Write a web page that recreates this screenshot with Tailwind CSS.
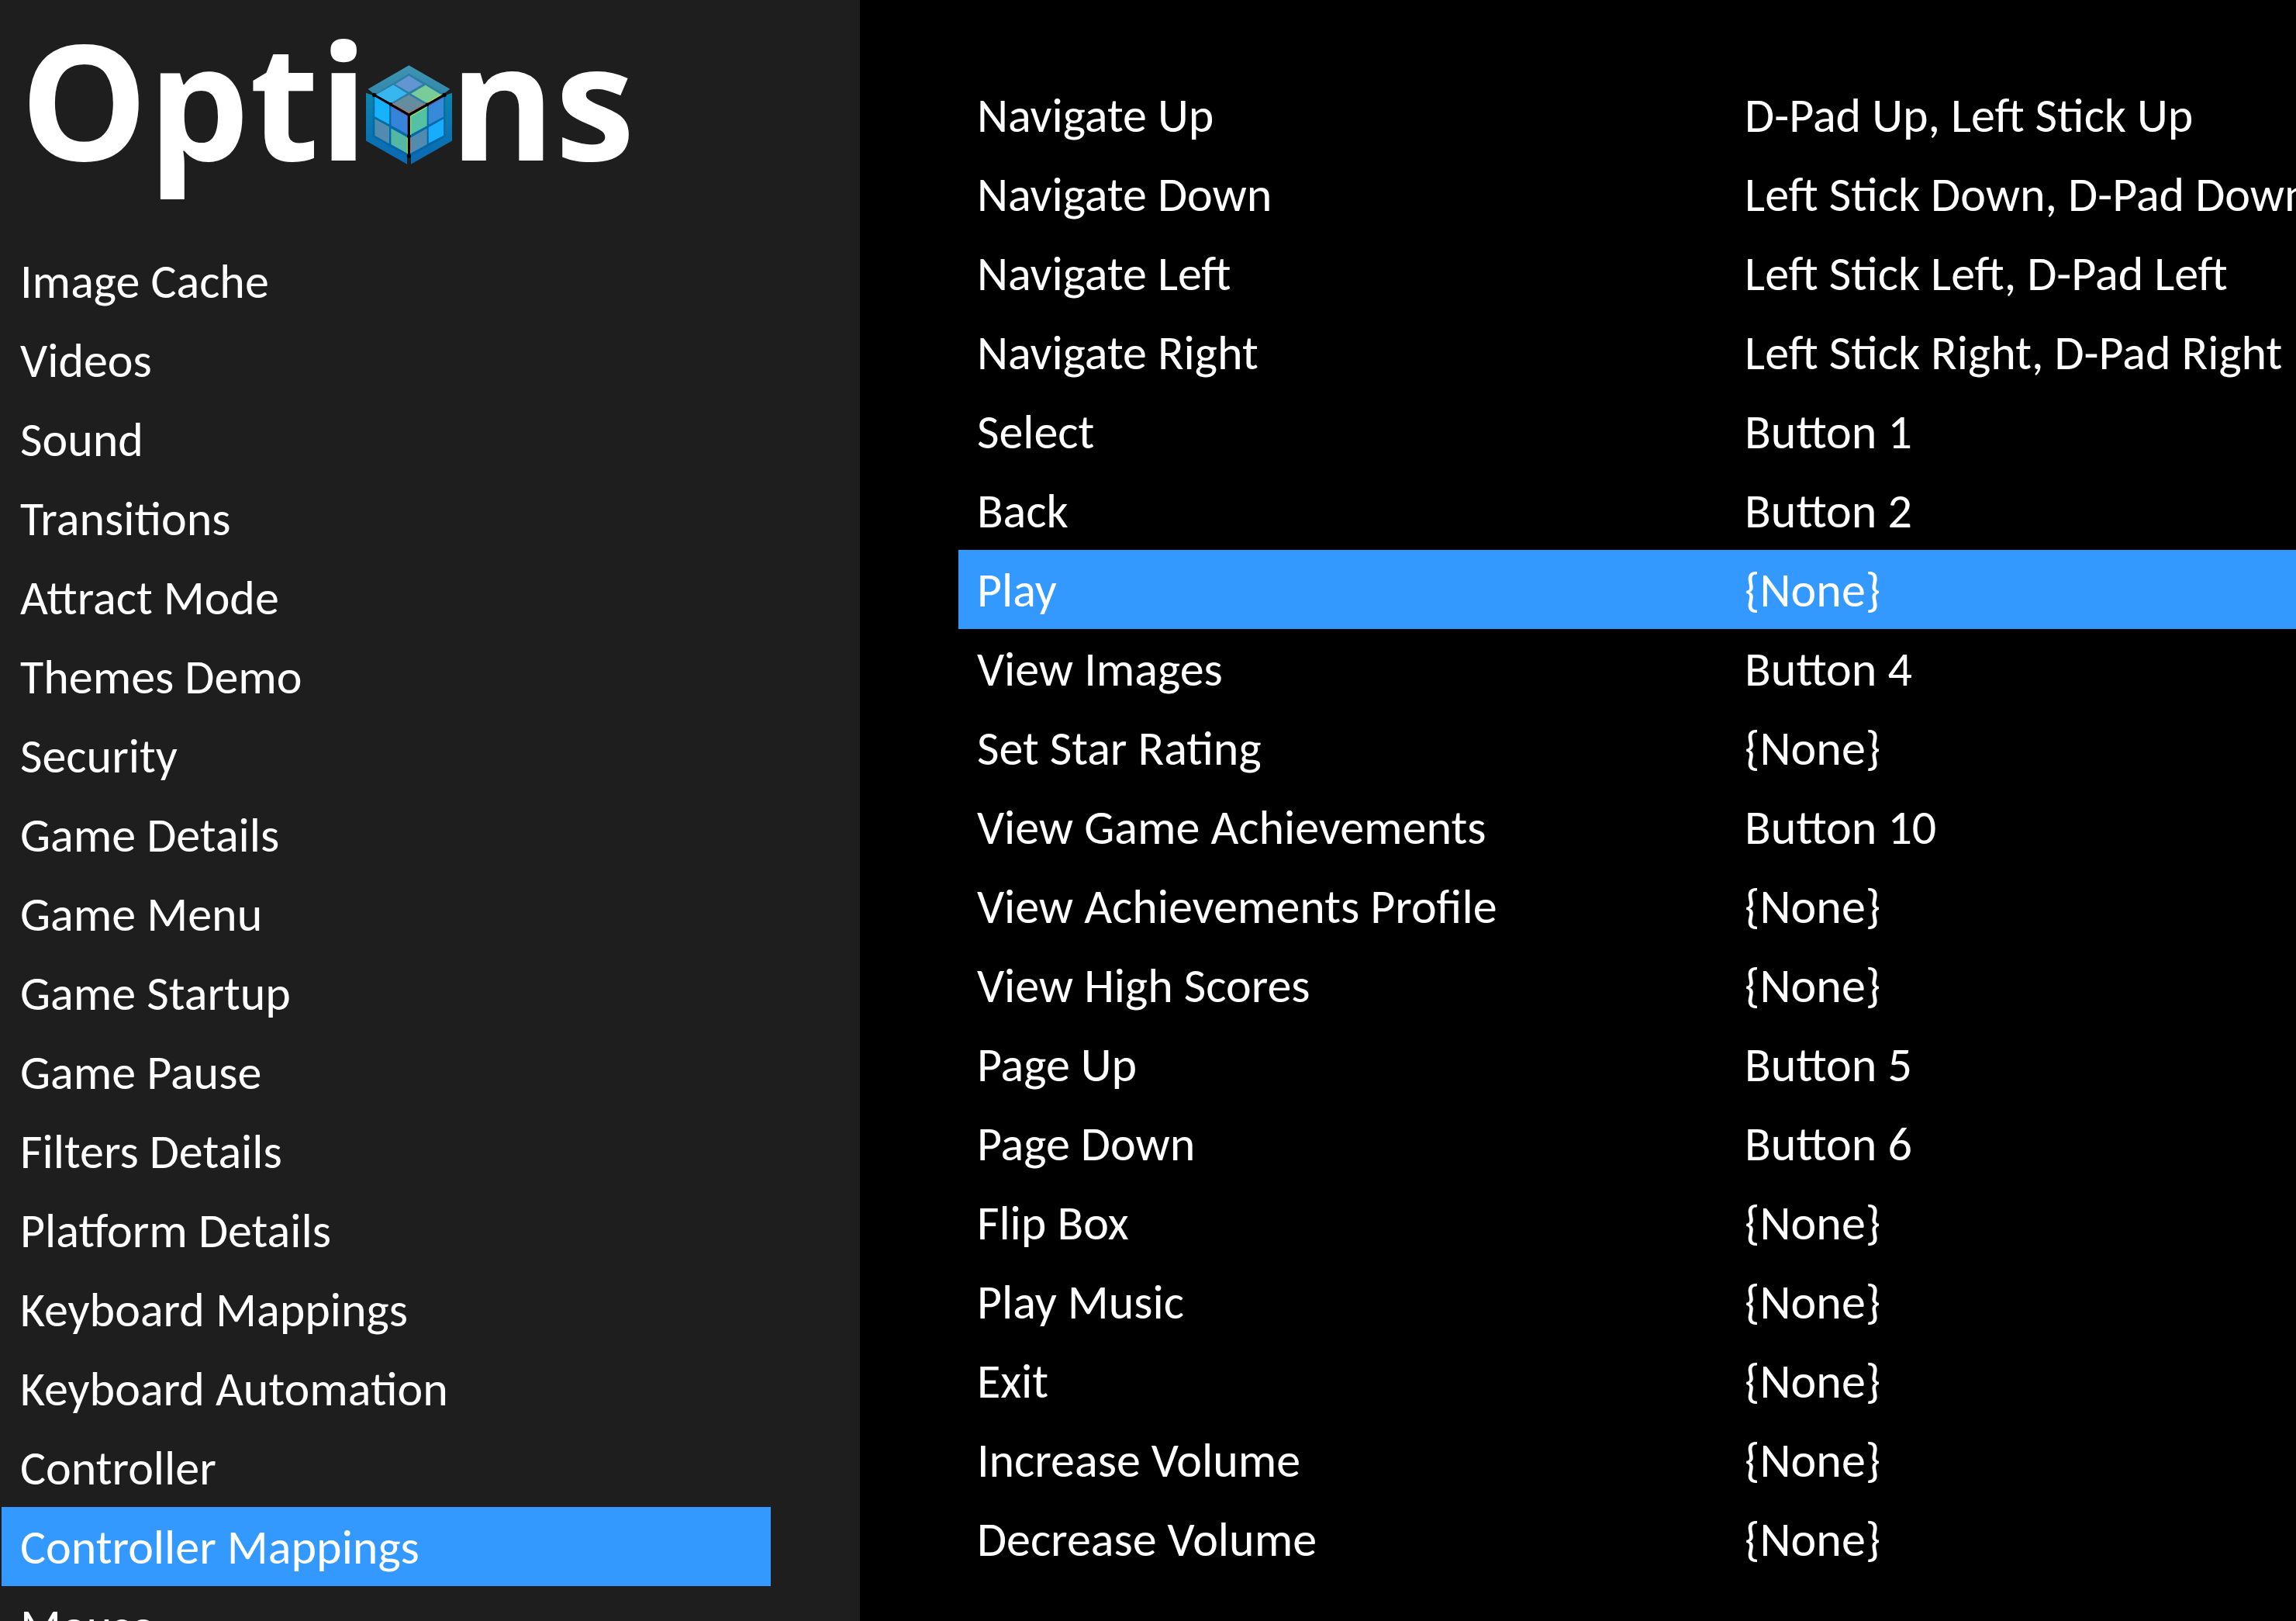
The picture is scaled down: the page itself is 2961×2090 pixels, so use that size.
<!DOCTYPE html>
<html lang="en">
<head>
    <meta charset="UTF-8">
    <meta name="viewport" content="width=device-width, initial-scale=1.0">
    <title>Options</title>
    <script src="https://cdn.jsdelivr.net/npm/@tailwindcss/browser@4"></script>
</head>
<body class="flex h-screen overflow-hidden bg-black text-white font-[Calibri,Carlito,Lato,sans-serif] text-[62px] leading-[100px] whitespace-nowrap">

    <!-- Sidebar -->
    <aside class="w-[37.45%] shrink-0 bg-[#1e1e1e]">
        <h1 class="pl-[26px] pb-[57px] font-['Open_Sans',sans-serif] font-bold text-[207px] leading-[254px]">Opti<svg class="inline align-baseline w-[111px] h-[128px] -mx-[3px] -mb-[5px]" viewBox="66 40 333 383" aria-hidden="true">
                <defs>
                    <linearGradient id="side" x1="0" y1="0" x2="0" y2="1">
                        <stop offset="0" stop-color="#0a86ae"/>
                        <stop offset="1" stop-color="#0a68b4"/>
                    </linearGradient>
                    <linearGradient id="inner" x1="0" y1="0" x2="0" y2="1">
                        <stop offset="0" stop-color="#0574a0"/>
                        <stop offset="1" stop-color="#0362ac"/>
                    </linearGradient>
                    <linearGradient id="top" x1="0" y1="0" x2="0" y2="1">
                        <stop offset="0" stop-color="#4094b2"/>
                        <stop offset="1" stop-color="#2682a8"/>
                    </linearGradient>
                </defs>
                <!-- faces -->
                <path fill="url(#top)" d="M232 40 391 132 368 150 232 229 98 152 74 132z"/>
                <path fill="url(#side)" d="M66 147 98 158 232 235 225 423 66 332z"/>
                <path fill="url(#side)" d="M399 147 368 158 232 235 240 423 399 332z"/>
                <path fill="#2c7fa4" d="M232 72 368 150 232 229 98 152z"/>
                <path fill="url(#inner)" d="M92 152 232 235 228 393 92 316z"/>
                <path fill="url(#inner)" d="M373 152 232 235 238 393 373 316z"/>
                <!-- top tiles -->
                <path fill="#6295d2" d="M232 81 285 113 232 144 179 113z"/>
                <path fill="#38b6f0" d="M172 116 225 149 162 186 105 154z"/>
                <path fill="#79cc97" d="M296 117 358 154 303 187 240 150z"/>
                <path fill="#668c9f" d="M232 154 295 191 232 227 168 190z"/>
                <!-- left tiles -->
                <path fill="#16b2fb" d="M100 158 156 191 156 268 100 238z"/>
                <path fill="#3584d9" d="M163 196 228 235 228 309 163 272z"/>
                <path fill="#528bb0" d="M100 247 156 278 156 343 100 312z"/>
                <path fill="#54b6a4" d="M163 284 228 320 228 382 163 346z"/>
                <!-- right tiles -->
                <path fill="#54c1a5" d="M238 236 302 199 302 274 238 309z"/>
                <path fill="#3789d9" d="M308 195 366 162 366 239 308 270z"/>
                <path fill="#528bb0" d="M238 320 302 284 302 346 238 381z"/>
                <path fill="#18acfc" d="M308 280 366 247 366 312 308 342z"/>
                <!-- coloured fringes beside the black edges -->
                <g fill="none" stroke-width="3">
                    <path stroke="#d5683b" d="M168 187 232 225 296 187M239 320V380"/>
                    <path stroke="#c6e52e" d="M300 187 358 153M239 309V237L302 201M226 320V382"/>
                    <path stroke="#84429f" d="M164 198 227 236V309M308 197 365 164"/>
                </g>
                <path fill="none" stroke="#1e1e1e" stroke-width="14" d="M232 396V424"/>
                <path fill="none" stroke="#000" stroke-width="9" d="M98 155 232 232 369 155M232 232V391"/>
                <path d="M90 155a8 8 0 1 0 16 0 8 8 0 1 0-16 0M361 155a8 8 0 1 0 16 0 8 8 0 1 0-16 0M224 391a8 8 0 1 0 16 0 8 8 0 1 0-16 0M155 191a7 7 0 1 0 14 0 7 7 0 1 0-14 0M296 192a7 7 0 1 0 14 0 7 7 0 1 0-14 0M225 315a7 7 0 1 0 14 0 7 7 0 1 0-14 0"/>
            </svg>ns</h1>

        <nav class="ml-[2px] mr-[115px] [&_a]:block [&_a]:pt-[2px] [&_a]:pl-6">
            <a href="#">Image Cache</a>
            <a href="#">Videos</a>
            <a href="#">Sound</a>
            <a href="#">Transitions</a>
            <a href="#">Attract Mode</a>
            <a href="#">Themes Demo</a>
            <a href="#">Security</a>
            <a href="#">Game Details</a>
            <a href="#">Game Menu</a>
            <a href="#">Game Startup</a>
            <a href="#">Game Pause</a>
            <a href="#">Filters Details</a>
            <a href="#">Platform Details</a>
            <a href="#">Keyboard Mappings</a>
            <a href="#">Keyboard Automation</a>
            <a href="#">Controller</a>
            <a href="#" class="bg-[#3399ff]" aria-current="page">Controller Mappings</a>
            <a href="#">Mouse</a>
        </nav>
    </aside>

    <!-- Controller mappings -->
    <main class="min-w-0 flex-1 overflow-hidden pt-[97px] pl-[127px]">
        <table class="w-full table-fixed text-left [&_th]:w-[57.4%] [&_th]:font-normal [&_th]:pt-[2px] [&_th]:pl-6 [&_td]:pt-[2px] [&_td]:pl-6">
            <tbody>
                <tr><th scope="row">Navigate Up</th><td>D-Pad Up, Left Stick Up</td></tr>
                <tr><th scope="row">Navigate Down</th><td>Left Stick Down, D-Pad Down</td></tr>
                <tr><th scope="row">Navigate Left</th><td>Left Stick Left, D-Pad Left</td></tr>
                <tr><th scope="row">Navigate Right</th><td>Left Stick Right, D-Pad Right</td></tr>
                <tr><th scope="row">Select</th><td>Button 1</td></tr>
                <tr><th scope="row">Back</th><td>Button 2</td></tr>
                <tr class="bg-[#3399ff]"><th scope="row">Play</th><td>{None}</td></tr>
                <tr><th scope="row">View Images</th><td>Button 4</td></tr>
                <tr><th scope="row">Set Star Rating</th><td>{None}</td></tr>
                <tr><th scope="row">View Game Achievements</th><td>Button 10</td></tr>
                <tr><th scope="row">View Achievements Profile</th><td>{None}</td></tr>
                <tr><th scope="row">View High Scores</th><td>{None}</td></tr>
                <tr><th scope="row">Page Up</th><td>Button 5</td></tr>
                <tr><th scope="row">Page Down</th><td>Button 6</td></tr>
                <tr><th scope="row">Flip Box</th><td>{None}</td></tr>
                <tr><th scope="row">Play Music</th><td>{None}</td></tr>
                <tr><th scope="row">Exit</th><td>{None}</td></tr>
                <tr><th scope="row">Increase Volume</th><td>{None}</td></tr>
                <tr><th scope="row">Decrease Volume</th><td>{None}</td></tr>
            </tbody>
        </table>
    </main>

</body>
</html>
